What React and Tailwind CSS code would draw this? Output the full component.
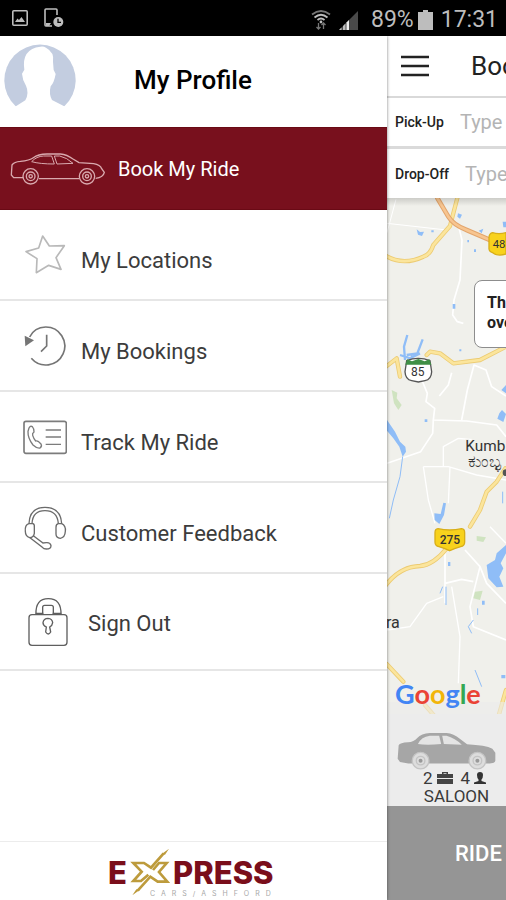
import React, { useState } from 'react';

function StatusBar() {
  return (
    <div className="h-9 shrink-0 bg-black flex items-center pl-3 pr-2 text-[#bdbdbd]">
      <svg className="w-4 h-4 shrink-0" viewBox="0 0 16 16" fill="none" stroke="currentColor" strokeWidth="1.6">
        <rect x="0.8" y="0.8" width="14.4" height="14.4" rx="1" />
        <path d="M3 12 L5.5 8.5 L7 10 L9.5 7 L13 12 Z" fill="currentColor" stroke="none" />
      </svg>
      <svg className="w-5 h-5 ml-4 shrink-0" viewBox="0 0 20 20" fill="none" stroke="currentColor" strokeWidth="1.6">
        <path d="M13 7 V2 Q13 1 12 1 H2 Q1 1 1 2 V17 Q1 18 2 18 H8" />
        <path d="M2 15 H7 L5 18 H2 Z" fill="currentColor" stroke="none" />
        <circle cx="14.3" cy="14" r="5" fill="currentColor" stroke="none" />
        <path d="M14 10.8 V14.3 H17" stroke="#000" strokeWidth="1.3" />
      </svg>
      <div className="ml-auto flex items-center pt-1">
        <svg className="w-5 h-5 shrink-0" viewBox="0 0 20 20" fill="none" stroke="currentColor" strokeWidth="1.8">
          <path d="M1 4.5 Q10 -2.5 19 4.5" stroke="#777" />
          <path d="M3.5 7.5 Q10 2 16.5 7.5" />
          <path d="M6.5 10 Q10 7 13.5 10" />
          <circle cx="10" cy="12" r="1.4" fill="currentColor" stroke="none" />
          <path d="M7.5 13 V19 M5.5 17 L7.5 19 L9.5 17 M12.5 19 V13 M10.5 15 L12.5 13 L14.5 15" stroke="#777" strokeWidth="1.3" />
        </svg>
        <svg className="w-5 h-5 ml-2 shrink-0" viewBox="0 0 20 20">
          <path d="M0 20 L19 1 V20 Z" fill="#4a4a4a" />
          <path d="M0 20 L2.5 17.5 V20 Z M4 20 V16 L6.5 13.5 V20 Z" fill="#bdbdbd" />
          <path d="M7.5 20 V12.5 L10 10 V20 Z" fill="#eee" />
        </svg>
        <span className="ml-3 text-[23px] leading-7">89%</span>
        <svg className="w-[15px] h-5 ml-1 shrink-0" viewBox="0 0 15 20" fill="#bdbdbd">
          <path d="M5 0 H10 V2 H15 V20 H0 V2 H5 Z" />
        </svg>
        <span className="ml-2 text-[23px] leading-7">17:31</span>
      </div>
    </div>
  );
}

function Avatar() {
  return (
    <svg className="w-18 h-18 shrink-0" viewBox="10 135 216 216">
      <path d="M45 322 A107 107 0 1 1 191 322 Z" fill="#c3cde0" />
      <path
        d="M42 324 L74 304 Q86 282 76 260 Q65 242 64 224 L71 212 Q62 150 119 143 Q128 141 136 146 Q162 160 157 188 L159 213 L165 225 Q160 252 150 262 Q144 285 154 303 L195 324 Z"
        fill="#fff"
      />
    </svg>
  );
}

function CarOutline() {
  return (
    <svg className="w-24 h-8 shrink-0" viewBox="30 84 286 96" fill="none" stroke="#d9a9ae" strokeWidth="4">
      <path d="M68 158 H40 L33 150 L35 120 Q42 110 60 109 Q88 106 99 98 Q113 88 140 87 H180 Q200 89 218 102 L236 113 L280 116 Q300 120 304 131 L312 142 Q309 157 286 160" />
      <path d="M116 161 H236" />
      <path d="M94 110 Q108 94 130 93 H154 L162 117 Q118 117 94 110 Z M162 93 H178 Q200 98 218 115 L170 117 Z" strokeWidth="3" />
      <circle cx="91" cy="154" r="23" />
      <circle cx="91" cy="154" r="13" />
      <circle cx="91" cy="154" r="5" />
      <circle cx="260" cy="154" r="23" />
      <circle cx="260" cy="154" r="13" />
      <circle cx="260" cy="154" r="5" />
    </svg>
  );
}

function StarIcon() {
  return (
    <svg className="w-11 h-11" viewBox="70 328 132 132" fill="none" stroke="#b9b9b9" strokeWidth="5" strokeLinejoin="round">
      <path d="M129 337 L149 367 L194 366 L169 402 L184 437 L147 425 L110 447 L112 405 L79 384 L117 373 Z" />
    </svg>
  );
}

function HistoryIcon() {
  return (
    <svg className="w-11 h-11" viewBox="72 73 132 132" fill="none" stroke="#757575" strokeWidth="5">
      <path d="M92 112 Q106 83 140 82 A57 57 0 1 1 97 176" />
      <path d="M77 108 L105 122 L79 140 Z" fill="#757575" stroke="none" />
      <path d="M143 105 V139 L126 156" />
    </svg>
  );
}

function PhoneCardIcon() {
  return (
    <svg className="w-11 h-11" viewBox="70 345 132 132" fill="none" stroke="#7c7c7c" strokeWidth="5">
      <rect x="73" y="364" width="127" height="96" rx="6" />
      <path d="M138 390 H184 M138 411 H184 M138 433 H184" strokeWidth="4" />
      <path
        d="M88 384 Q92 376 98 380 Q104 387 103 396 Q97 400 99 406 Q102 416 108 423 Q114 420 124 432 Q128 438 121 444 Q112 446 100 435 Q84 415 85 394 Z"
        strokeWidth="4"
      />
    </svg>
  );
}

function HeadsetIcon() {
  return (
    <svg className="w-11 h-11" viewBox="70 46 132 132" fill="none" stroke="#6b6b6b" strokeWidth="4">
      <path d="M88 99 Q90 50 136 50 Q183 50 186 99" />
      <path d="M97 99 Q99 60 136 60 Q173 60 176 99" />
      <path d="M88 99 H100 Q105 101 104 110 V128 Q102 140 90 141 Q77 137 77 122 Q75 103 88 99 Z" />
      <path d="M176 99 H186 Q199 105 197 122 Q196 141 182 143 Q169 142 169 130 V110 Q169 100 176 99 Z" />
      <path d="M91 141 L128 170 Q132 175 140 175 Q154 175 154 165 Q152 155 140 156 L130 157 L101 135" />
    </svg>
  );
}

function LockIcon() {
  return (
    <svg className="w-12 h-12" viewBox="73 324 144 144" fill="none" stroke="#5f5f5f" strokeWidth="4">
      <rect x="88" y="374" width="114" height="92" rx="9" />
      <path d="M109 373 Q107 326 146 326 Q185 326 184 373 M129 373 V352 Q129 346 135 346 H155 Q161 346 161 352 V373" />
      <path d="M108 371 H131 M159 371 H185" strokeWidth="5" />
      <path d="M140 411 Q130 406 130 398 Q132 385 145 385 Q158 386 159 398 Q158 407 150 411 L153 426 Q146 438 138 426 Z" />
    </svg>
  );
}

function Logo() {
  return (
    <svg className="w-[170px] h-[52px]" viewBox="0 0 170 52" role="img" aria-label="Express Cars Ashford">
      <g fill="#7a0e1b" fontFamily="Inter, sans-serif" fontWeight="800" fontSize="31">
        <text x="1" y="39">E</text>
        <text x="66" y="39">PRESS</text>
      </g>
      <g transform="translate(16 -1) scale(0.3333)" fill="none" stroke="#bd9b3c" strokeWidth="8">
        <path d="M122 28 L84 71 L63 57 H31 L56 83 L31 111 H54 L76 92" />
        <path d="M44 140 L82 98 L104 113 H133 L108 84 L131 57 H108 L90 78" />
        <path d="M138 14 L126 32 L116 30 Z M28 154 L40 136 L50 138 Z" fill="#bd9b3c" stroke="none" />
      </g>
      <text x="43" y="51" fill="#a8a8a8" fontFamily="Inter, sans-serif" fontSize="7" className="tracking-[6px]">CARS/ASHFORD</text>
    </svg>
  );
}

const items = [
  { id: 'locations', label: 'My Locations', icon: StarIcon },
  { id: 'bookings', label: 'My Bookings', icon: HistoryIcon },
  { id: 'track', label: 'Track My Ride', icon: PhoneCardIcon },
  { id: 'feedback', label: 'Customer Feedback', icon: HeadsetIcon },
];

function Drawer() {
  return (
    <aside className="relative z-10 w-[387px] shrink-0 bg-white flex flex-col shadow-[0_0_3px_rgba(0,0,0,0.5)]">
      <div className="h-[91px] shrink-0 flex items-start pl-1 pt-2">
        <Avatar />
        <h1 className="ml-[58px] mt-5 text-[26px] leading-8 font-medium text-black">My Profile</h1>
      </div>
      <nav className="flex flex-col">
        <button className="h-[83px] bg-[#78101d] border-y border-[#6a0a15] flex items-center gap-3 pl-[10px] text-left text-white">
          <CarOutline />
          <span className="text-xl">Book My Ride</span>
        </button>
        {items.map(({ id, label, icon: Icon }) => (
          <button key={id} className="h-[91px] border-b-2 border-[#e6e6e6] flex items-center gap-[14px] pl-[23px] text-left">
            <Icon />
            <span className="pt-3 text-[22px] leading-7 text-[#3c3c3c]">{label}</span>
          </button>
        ))}
        <button className="h-[97px] border-b-2 border-[#e6e6e6] flex items-center gap-4 pl-6 text-left">
          <LockIcon />
          <span className="pt-1 text-[22px] leading-7 text-[#3c3c3c]">Sign Out</span>
        </button>
      </nav>
      <div className="mt-auto h-[59px] shrink-0 border-t border-[#ececec] flex justify-center items-center pr-1">
        <Logo />
      </div>
    </aside>
  );
}

function MapView() {
  return (
    <div className="relative flex-1 min-h-0 bg-[#f0f0eb] overflow-hidden">
      <svg className="w-full h-full" viewBox="21 24 357 1548" preserveAspectRatio="xMinYMin slice" fill="none">
        {/* minor roads */}
        <g stroke="#fff" strokeWidth="5" strokeLinejoin="round">
          <path d="M21 128 L48 28 M21 100 L200 120" strokeWidth="3" />
          <path d="M236 110 L246 150 L240 270 L222 330 L218 375 L232 395 L250 400" />
          <path d="M128 576 L142 610 L138 635 L164 655 L160 690 L260 693 L350 705 L378 740" />
          <path d="M160 690 L158 730 L122 785 L21 820 M178 618 L205 585 L215 548 M245 690 L262 600 L282 525 L318 540 L335 590 L378 618" />
          <path d="M190 830 V770 L235 745 L285 750 M130 830 H205 L290 855 L378 870 M130 830 L145 930 L165 1000 M210 830 L205 940" strokeWidth="4" />
          <path d="M195 1090 V1240 M195 1180 L245 1168 L280 1175 M255 1080 L300 1130 L320 1180 L378 1240 M300 1130 L270 1250 L280 1310 L378 1350" />
          <path d="M21 1320 L90 1310 L140 1240 L190 1220 M215 1190 L240 1340 L235 1480 M330 1010 L378 1060" strokeWidth="4" />
        </g>
        {/* highways */}
        <g strokeLinejoin="round" strokeLinecap="round">
          <path d="M18 198 Q70 228 130 200 Q150 195 160 165 L210 108 L232 24 M18 530 L50 505 L60 560 M140 495 L150 485 L180 490 L220 520 L300 510 L378 470" stroke="#eccb72" strokeWidth="13" />
          <path d="M18 198 Q70 228 130 200 Q150 195 160 165 L210 108 L232 24 M18 530 L50 505 L60 560 M140 495 L150 485 L180 490 L220 520 L300 510 L378 470" stroke="#fbe59c" strokeWidth="8" />
          <path d="M376 835 L350 875 L320 905 L300 960 L270 1010 M200 1075 Q160 1125 120 1128 Q60 1130 18 1185 M20 1422 L70 1475 M135 1545 L165 1580 M378 1500 L355 1580" stroke="#eccb72" strokeWidth="13" />
          <path d="M376 835 L350 875 L320 905 L300 960 L270 1010 M200 1075 Q160 1125 120 1128 Q60 1130 18 1185 M20 1422 L70 1475 M135 1545 L165 1580 M378 1500 L355 1580" stroke="#fbe59c" strokeWidth="8" />
          <path d="M172 24 L205 80 Q220 105 260 120 L330 150" stroke="#e3a56c" strokeWidth="14" />
          <path d="M172 24 L205 80 Q220 105 260 120 L330 150" stroke="#f7c590" strokeWidth="8" />
        </g>
        {/* woods */}
        <path d="M35 600 L52 608 L50 625 L65 645 L55 660 L42 640 Z M290 1038 L318 1042 L310 1056 L290 1052 Z M285 1205 L308 1202 L300 1230 L280 1225 Z" fill="#cfe3c0" />
        {/* water */}
        <g fill="#8fbdf7">
          <path d="M110 118 L120 126 L132 125 L126 138 L114 134 Z M234 70 L246 74 L240 86 L232 80 Z M296 122 L310 116 L305 130 Z M368 95 H378 V112 H370 Z" />
          <path d="M154 121 h7 v6 h-7 Z M262 150 h5 v7 h-5 Z M282 178 h6 v8 h-6 Z M218 342 h8 v14 h-8 Z M238 478 h6 v6 h-6 Z M134 688 h8 v8 h-8 Z" />
          <path d="M21 690 L45 725 L60 755 L76 770 L78 785 L68 800 L58 770 L40 745 L21 722 Z" />
          <path d="M163 970 L182 972 L190 938 L198 940 L192 975 L178 1002 L164 990 Z" />
          <path d="M320 1125 L345 1110 L350 1090 L378 1065 V1090 L362 1120 L370 1135 L358 1160 L370 1190 L350 1192 L325 1165 Z" />
          <path d="M358 670 L366 660 L378 672 L370 696 L352 686 Z M364 600 L378 585 V610 Z M306 1232 h8 v12 h-8 Z M204 1116 h7 v12 h-7 Z M364 1455 h12 v10 h-12 Z" />
        </g>
        <g stroke="#8fbdf7" strokeWidth="7">
          <path d="M82 435 L72 470 L75 510 M128 448 L112 490 L80 495 M60 495 L90 505 L120 490 M95 490 L98 515" />
          <path d="M68 800 L60 860 L40 930 L28 985 M188 1190 L180 1210 M198 1190 V1245 M293 1255 V1275 M280 1290 L265 1310 L275 1330 M285 1440 L305 1490 M368 905 V940" strokeWidth="3" />
        </g>
        {/* road shields */}
        <path d="M338 128 Q356 134 378 128 V192 Q352 200 338 188 Q326 184 327 174 V142 Q328 130 338 128 Z" fill="#f8d21c" stroke="#d8ae18" strokeWidth="4" />
        <path d="M174 1016 Q209 1024 245 1016 Q254 1017 254 1028 V1056 Q254 1068 242 1070 Q226 1074 209 1082 Q192 1074 177 1070 Q165 1068 165 1056 V1028 Q165 1017 174 1016 Z" fill="#f8d21c" stroke="#d8ae18" strokeWidth="4" />
        <path d="M80 512 Q115 498 150 512 L155 545 Q154 568 135 572 L115 576 L95 572 Q76 568 75 545 Z" fill="#fff" stroke="#555" strokeWidth="4" />
        <path d="M76 524 L82 508 L96 514 L115 507 L134 514 L148 508 L154 524 Z" fill="#3f8f46" />
        <g fontFamily="Roboto, sans-serif" fill="#333">
          <text x="338" y="174" fontSize="34">48</text>
          <text x="93" y="558" fontSize="36">85</text>
          <text x="179" y="1063" fontSize="36" fontWeight="500">275</text>
          <text x="256" y="784" fontSize="46" stroke="#f0f0eb" strokeWidth="6" paintOrder="stroke">Kumb</text>
          <text x="263" y="832" fontSize="50" stroke="#f0f0eb" strokeWidth="6" paintOrder="stroke">ಕುಂಬ್ಳ</text>
          <text x="18" y="1313" fontSize="48" stroke="#f0f0eb" strokeWidth="6" paintOrder="stroke">ra</text>
        </g>
        <circle cx="378" cy="848" r="10" fill="#555" />
      </svg>
      <div className="absolute inset-x-0 top-0 h-2 bg-linear-to-b from-black/15 to-transparent" />
      <div className="absolute inset-x-0 bottom-0 h-3 bg-[#ebebeb]/60" />
      <div className="absolute left-[87px] top-[82px] w-60 h-[68px] rounded-lg border border-[#8d8d8d] bg-white pl-3 pt-3 text-base leading-5 font-bold text-[#222]">
        <p>This</p>
        <p>over</p>
      </div>
      <div className="absolute left-2 bottom-0 text-[27px] leading-10 font-bold font-[Lato,sans-serif]">
        <span className="text-[#4285f4]">G</span>
        <span className="text-[#ea4335]">o</span>
        <span className="text-[#f2b50a]">o</span>
        <span className="text-[#4285f4]">g</span>
        <span className="text-[#34a853]">l</span>
        <span className="text-[#ea4335]">e</span>
      </div>
    </div>
  );
}

function CarSolid() {
  return (
    <svg className="w-[99px] h-[38px]" viewBox="51 96 298 114">
      <path
        d="M60 186 L53 176 L56 136 Q60 128 84 127 Q102 126 112 114 Q124 100 150 99 H200 Q222 101 240 116 L262 133 Q318 136 338 146 L347 158 V182 Q345 190 330 191 H85 Z"
        fill="#a6a6a6"
      />
      <path d="M114 132 Q124 110 150 107 H178 L184 132 Q140 136 114 132 Z M187 107 H200 Q226 114 246 134 L192 132 Z" fill="#e4e4e4" />
      <g fill="#ddd" stroke="#c4c4c4" strokeWidth="4">
        <circle cx="122" cy="182" r="25" />
        <circle cx="293" cy="182" r="25" />
        <circle cx="122" cy="182" r="13" />
        <circle cx="293" cy="182" r="13" />
      </g>
      <circle cx="122" cy="182" r="6" fill="#999" />
      <circle cx="293" cy="182" r="6" fill="#999" />
    </svg>
  );
}

function BookingScreen() {
  const [pickUp, setPickUp] = useState('');
  const [dropOff, setDropOff] = useState('');

  return (
    <main className="flex-1 min-w-0 flex flex-col bg-white overflow-hidden whitespace-nowrap">
      <header className="h-[62px] shrink-0 border-b-2 border-[#d9d9d9] flex items-center pl-3">
        <button aria-label="Menu" className="shrink-0">
          <svg className="w-8 h-8" viewBox="0 0 32 32" stroke="#222" strokeWidth="2.4">
            <path d="M2 7 H30 M2 16 H30 M2 25 H30" />
          </svg>
        </button>
        <h2 className="ml-10 text-[26px] text-[#222]">Book</h2>
      </header>
      <div className="h-[51px] shrink-0 border-b-3 border-[#dadada] flex items-center pl-2">
        <label htmlFor="pickup" className="text-sm font-medium text-[#222]">Pick-Up</label>
        <input
          id="pickup"
          className="ml-4 w-48 shrink-0 text-xl outline-none placeholder:text-[#b4b4b4]"
          placeholder="Type"
          value={pickUp}
          onChange={(e) => setPickUp(e.target.value)}
        />
      </div>
      <div className="h-[49px] shrink-0 flex items-center pl-2">
        <label htmlFor="dropoff" className="text-sm font-medium text-[#222]">Drop-Off</label>
        <input
          id="dropoff"
          className="ml-4 w-48 shrink-0 text-xl outline-none placeholder:text-[#b4b4b4]"
          placeholder="Type"
          value={dropOff}
          onChange={(e) => setDropOff(e.target.value)}
        />
      </div>
      <MapView />
      <div className="h-[92px] shrink-0 bg-[#ececec] pt-[18px] flex flex-col text-[#3a3a3a]">
        <div className="w-[119px] shrink-0 flex flex-col items-center">
          <CarSolid />
          <div className="pl-4 flex items-center text-[17px] leading-4">
            <span>2</span>
            <svg className="w-4 h-3 ml-1" viewBox="0 0 16 12" fill="#444">
              <path d="M5 2 V0 H11 V2 H16 V6 H0 V2 Z M6.5 2 H9.5 V1.2 H6.5 Z M0 7 H16 V12 H0 Z" />
            </svg>
            <span className="ml-2">4</span>
            <svg className="w-3 h-3 ml-1" viewBox="0 0 12 12" fill="#333">
              <path d="M6 0 Q9 0 9 3 Q9 6 7.5 7.5 V9 L12 10.5 V12 H0 V10.5 L4.5 9 V7.5 Q3 6 3 3 Q3 0 6 0 Z" />
            </svg>
          </div>
          <span className="pl-5 text-[17px] leading-5">SALOON</span>
        </div>
      </div>
      <button className="h-[94px] shrink-0 bg-[#959595] pl-[68px] text-left text-[22px] font-medium text-white">RIDE</button>
    </main>
  );
}

function App() {
  return (
    <div className="h-screen flex flex-col overflow-hidden bg-white font-[Roboto,sans-serif]">
      <StatusBar />
      <div className="flex-1 min-h-0 flex">
        <Drawer />
        <BookingScreen />
      </div>
    </div>
  );
}

export default App;
